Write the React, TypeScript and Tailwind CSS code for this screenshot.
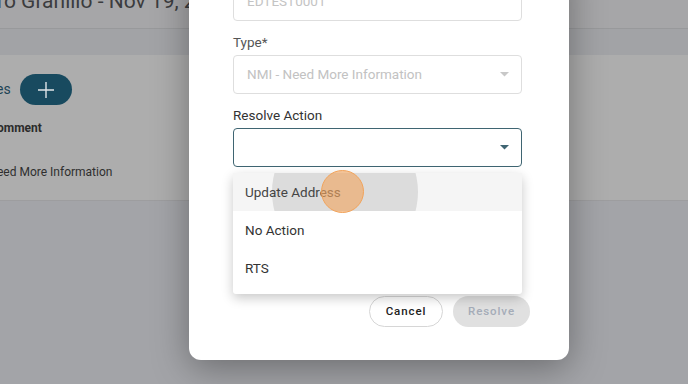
import React from "react";

function Caret({ color }: { color: string }) {
  return (
    <svg width="9" height="5" viewBox="0 0 9 5" className="shrink-0">
      <path d="M0 0 L9 0 L4.5 4.5 Z" fill={color} />
    </svg>
  );
}

export default function App() {
  return (
    <div
      className="relative w-[688px] h-[384px] overflow-hidden bg-[#a3a4a8]"
      style={{ fontFamily: "Roboto, 'Liberation Sans', sans-serif" }}
    >
      {/* background page (dimmed) */}
      <div className="flex flex-col w-full">
        <div className="h-[29px] bg-[#a6a6a8] border-b border-[#98999b] overflow-hidden">
          <div className="mt-[-9px] text-[21px] leading-[21px] text-[#3b3c3e] whitespace-nowrap ml-[-3px]">
            ro Granillo - Nov 19, 2024
          </div>
        </div>
        <div className="h-[26px] bg-[#a2a3a6]" />
        <div className="h-[146px] bg-[#adadad] border-b border-[#9d9d9f] flex flex-col">
          <div className="flex items-center mt-[19px] h-[31px]">
            <span className="text-[14px] text-[#1d4456] ml-[-4px]">es</span>
            <div className="ml-[9px] w-[52px] h-[31px] rounded-full bg-[#184a5f] flex items-center justify-center">
              <svg width="18" height="18" viewBox="0 0 18 18">
                <path d="M9 1 V17 M1 9 H17" stroke="#dfe5e8" strokeWidth="1.4" />
              </svg>
            </div>
          </div>
          <div className="mt-[14px] text-[12px] font-bold text-[#2b2b2b] ml-[-3px]">omment</div>
          <div className="mt-[26px] text-[12px] text-[#2f2f2f] ml-[-3px]">eed More Information</div>
        </div>
      </div>

      {/* modal */}
      <div className="absolute left-[189px] top-[-40px] w-[380px] h-[400px] bg-white rounded-b-[12px] shadow-[0_8px_36px_rgba(0,0,0,0.35)]">
        <div className="ml-[44px] w-[289px] flex flex-col">
          <div className="mt-[22px] h-[39px] border border-[#dedede] rounded-[4px] flex items-center px-[13px] text-[13.5px] text-[#c4c4c4]">
            EDTEST0001
          </div>
          <div className="mt-[14px] text-[13.5px] leading-[15px] text-[#555]">Type*</div>
          <div className="mt-[5px] h-[39px] border border-[#dedede] rounded-[4px] flex items-center justify-between pl-[13px] pr-[12px] text-[13.5px] text-[#c2c2c2]">
            <span>NMI - Need More Information</span>
            <Caret color="#c8c8c8" />
          </div>
          <div className="mt-[14px] text-[13.5px] leading-[15px] text-[#333]">Resolve Action</div>
          <div className="relative mt-[5px] h-[39px] border border-[#3f6572] rounded-[4px] flex items-center justify-end pr-[12px]">
            <Caret color="#3f6572" />
            {/* dropdown menu */}
            <div className="absolute left-[-1px] top-[44px] w-[289px] bg-white rounded-[3px] shadow-[0_4px_12px_rgba(0,0,0,0.22)] pb-[7px] z-10">
              <div className="relative h-[38px] bg-[#f5f5f5] overflow-hidden flex items-center px-[12px] text-[13.5px] text-[#444]">
                <div className="absolute left-[39px] top-[-54px] w-[146px] h-[146px] rounded-full bg-[#dcdcdc]" />
                <span className="relative">Update Address</span>
              </div>
              <div className="h-[38px] flex items-center px-[12px] text-[13.5px] text-[#333]">No Action</div>
              <div className="h-[38px] flex items-center px-[12px] text-[13.5px] text-[#333]">RTS</div>
            </div>
          </div>
        </div>
        <div className="mt-[129px] mr-[39px] flex justify-end gap-[10px]">
          <div className="w-[74px] h-[31px] rounded-full border border-[#d6d6d6] flex items-center justify-center text-[11.5px] font-medium tracking-[0.08em] text-[#222]">
            Cancel
          </div>
          <div className="w-[77px] h-[31px] rounded-full bg-[#e0e0e0] flex items-center justify-center text-[11.5px] font-medium tracking-[0.08em] text-[#a5acb8]">
            Resolve
          </div>
        </div>
      </div>

      {/* click indicator */}
      <div className="absolute left-[321px] top-[170px] w-[43px] h-[43px] rounded-full bg-[rgba(240,165,95,0.62)] border-[1.5px] border-[#f2a35a] z-20" />
    </div>
  );
}
